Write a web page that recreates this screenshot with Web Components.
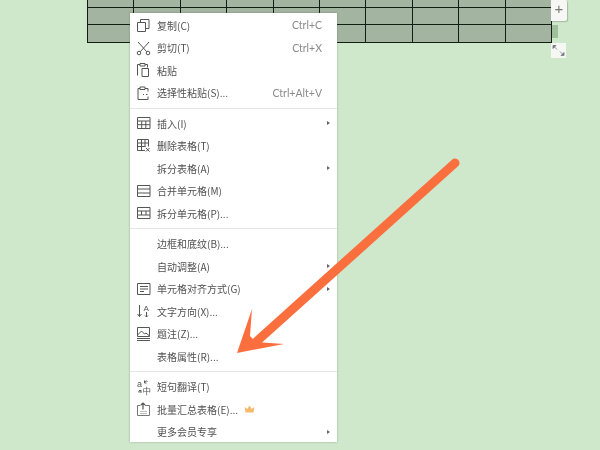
<!DOCTYPE html>
<html>
<head>
<meta charset="utf-8">
<style>
  html, body { margin: 0; padding: 0; height: 100%; overflow: hidden; background: #cfe7cb; }
  body { position: relative; width: 600px; height: 450px; font-family: "Liberation Sans", "Noto Sans CJK SC", sans-serif; }
</style>
</head>
<body>
<doc-table></doc-table>
<context-menu>
  <menu-item label="复制(C)" shortcut="Ctrl+C" icon="copy"></menu-item>
  <menu-item label="剪切(T)" shortcut="Ctrl+X" icon="cut"></menu-item>
  <menu-item label="粘贴" icon="paste"></menu-item>
  <menu-item label="选择性粘贴(S)..." shortcut="Ctrl+Alt+V" icon="pastesp"></menu-item>
  <menu-sep></menu-sep>
  <menu-item label="插入(I)" icon="grid" more></menu-item>
  <menu-item label="删除表格(T)" icon="gridx"></menu-item>
  <menu-item label="拆分表格(A)" more></menu-item>
  <menu-item label="合并单元格(M)" icon="merge"></menu-item>
  <menu-item label="拆分单元格(P)..." icon="split"></menu-item>
  <menu-sep></menu-sep>
  <menu-item label="边框和底纹(B)..."></menu-item>
  <menu-item label="自动调整(A)" more></menu-item>
  <menu-item label="单元格对齐方式(G)" icon="align" more></menu-item>
  <menu-item label="文字方向(X)..." icon="dir"></menu-item>
  <menu-item label="题注(Z)..." icon="caption"></menu-item>
  <menu-item label="表格属性(R)..."></menu-item>
  <menu-sep></menu-sep>
  <menu-item label="短句翻译(T)" icon="translate"></menu-item>
  <menu-item label="批量汇总表格(E)..." icon="batch" crown></menu-item>
  <menu-item label="更多会员专享" more></menu-item>
</context-menu>
<big-arrow></big-arrow>

<script>
class DocTable extends HTMLElement {
    constructor() {
        super();
        this.attachShadow({mode: 'open'});
        let cells = '';
        for (let i = 0; i < 30; i++) cells += '<i></i>';
        this.shadowRoot.innerHTML = `
        <style>
            :host { display: block; margin: -11px 0 0 87px; width: 465px; position: relative; filter: blur(.2px); }
            #grid {
                display: grid;
                grid-template-columns: repeat(10, 1fr);
                grid-auto-rows: 17.5px;
                background: #a3b5a0;
                border-left: 1px solid #0f1f10;
                border-bottom: 1px solid #0f1f10;
            }
            i { border-top: 1px solid #0f1f10; border-right: 1px solid #0f1f10; }
            #plus {
                position: absolute; left: 464px; top: 11px; width: 16px; height: 21px;
                background: #f7f8f6; border-radius: 0 2px 2px 0;
                box-shadow: 1px 1px 1px rgba(90,110,90,.35);
                color: #777; font: 15px/17px "Liberation Sans", sans-serif; text-align: center;
            }
            #tab { position: absolute; left: 465px; top: 36px; width: 6px; height: 13px; background: #9fc09b; }
            #resize {
                position: absolute; left: 464px; top: 54px; width: 15px; height: 15px;
                background: #f5f7f3;
            }
        </style>
        <div id="grid">${cells}</div>
        <div id="plus">+</div>
        <div id="tab"></div>
        <div id="resize">
            <svg width="15" height="15" viewBox="0 0 15 15" fill="#778" stroke="#778" stroke-width=".8">
                <path d="M2 2.500h3l-3 3zM3 3.500l3 3" />
                <path d="M13 12.500h-3l3-3zM12 11.500l-3-3" />
            </svg>
        </div>
        `;
    }
}
customElements.define('doc-table', DocTable);

class ContextMenu extends HTMLElement {
    constructor() {
        super();
        this.attachShadow({mode: 'open'});
        this.shadowRoot.innerHTML = `
        <style>
            :host {
                position: absolute; left: 130px; top: 13px; width: 207px; height: 429px;
                box-sizing: border-box; padding: 1px 0 0;
                background: #fff;
                box-shadow: 0 0 2px rgba(70,90,70,.4);
                display: flex; flex-direction: column;
                font-family: "Noto Sans CJK SC", "Liberation Sans", sans-serif;
            }
        </style>
        <slot></slot>
        `;
    }
}
customElements.define('context-menu', ContextMenu);

const ICONS = {
    copy: '<path d="M3.500 6.500h8v9h-8z"/><path d="M6.500 6.500v-3h8.500v9h-3.500"/>',
    cut: '<circle cx="5" cy="14" r="1.800"/><circle cx="14" cy="14" r="1.800"/><path d="M6.300 12.700L15 3M12.700 12.700L4 3"/>',
    paste: '<path d="M3.500 14.500v-11h2.500M11 3.500h2.500v3"/><path d="M6 2.500h5v2.500h-5z"/><path d="M8 7.500h6.500v8h-6.500z"/>',
    pastesp: '<path d="M6 4.500h-2v11h10v-3M11 4.500h3v3"/><path d="M6 3h5v2.500h-5z"/><path d="M9 10.500h1M12 10.500h1.500" />',
    grid: '<path d="M3.500 3.500h12.500v11h-12.500zM3.500 7h12.500M3.500 10.700h12.500M7.700 7v7.500M11.800 7v7.500"/>',
    gridx: '<path d="M11 13.500h-7.500v-11h11v7M3.500 6h11M3.500 9.500h8M7.500 2.500v11M11 2.500v7"/><path d="M12 11l3.500 3.500M15.500 11l-3.500 3.500" />',
    merge: '<path d="M3.500 3.500h12.500v11h-12.500zM3.500 7h12.500M3.500 11h12.500"/>',
    split: '<path d="M3.500 3.500h12.500v11h-12.500zM3.500 7h12.500M3.500 11h12.500M7.500 7v4M12 7v4"/>',
    align: '<path d="M3.500 3.500h12.500v11h-12.500z"/><path d="M6 6.500h8M6 9h8M6 11.500h4"/>',
    dir: '<path d="M5.500 3v11.500M3.500 12l2 2.500 2-2.500"/><text x="9.500" y="8.500" font-size="8" font-family="Liberation Sans" fill="#555" stroke="none">A</text><path d="M12.500 10v5M11 13.500l1.500 1.500 1.500-1.500"/>',
    caption: '<path d="M3.500 2.500h12v9h-12z"/><path d="M3.500 10l4-4 3 3 1.500-1 3.500 3"/><path d="M3 13.500h13M3 15.500h13"/>',
    translate: '<text x="3" y="8.500" font-size="9" font-family="Liberation Sans" fill="#555" stroke="none">a</text><text x="8.500" y="16" font-size="8.500" fill="#555" stroke="none">中</text><path d="M10.500 5c.5-2 2-2.500 3-1.500M10.500 2.500l0 2.500 2 0"/><path d="M7 12c-.5 2-2 2.500-3 1.500M7 15l0-2.500-2 0" />',
    batch: '<path d="M3.500 5.500h3M11 5.500h4.500v10h-12v-10" stroke="#777"/><path d="M9 9.500v-6.500M7 5l2-2 2 2" stroke-width="1.200"/><path d="M6 11.500h7M6 13.500h7" stroke="#bbb"/>'
};

class MenuItem extends HTMLElement {
    constructor() {
        super();
        this.attachShadow({mode: 'open'});
    }
    connectedCallback() {
        const icon = ICONS[this.getAttribute('icon')] || '';
        const shortcut = this.getAttribute('shortcut') || '';
        this.shadowRoot.innerHTML = `
        <style>
            :host {
                display: flex; align-items: center; flex: none;
                height: 22.500px; padding: 0 6px 0 4px;
                color: #505050; font-size: 10px; filter: blur(.25px);
            }
            svg { width: 18px; height: 18px; flex: none; fill: none; stroke: #555; stroke-width: 1; margin-right: 5px; }
            #label { white-space: pre; }
            #shortcut { margin-left: auto; color: #8a8a8a; font: 10.500px "Lato", "Liberation Sans", sans-serif; padding-right: 9px; }
            #crown { margin-left: 6px; width: 11px; height: 8px; margin-right: 0; stroke: none; fill: #f5b96e; }
            #more {
                margin-left: auto; margin-right: 1px; width: 0; height: 0;
                border-left: 3px solid #666; border-top: 2.500px solid transparent; border-bottom: 2.500px solid transparent;
            }
        </style>
        <svg viewBox="0 0 18 18">${icon}</svg>
        <span id="label">${this.getAttribute('label')}</span>
        ${this.hasAttribute('crown') ? '<svg id="crown" viewBox="0 0 12 10"><path d="M1 9.500L0 2.500l3.200 2.500L6 .5l2.800 4.500L12 2.500 11 9.500z"/></svg>' : ''}
        ${shortcut ? `<span id="shortcut">${shortcut}</span>` : ''}
        ${this.hasAttribute('more') ? '<span id="more"></span>' : ''}
        `;
    }
}
customElements.define('menu-item', MenuItem);

class MenuSep extends HTMLElement {
    constructor() {
        super();
        this.attachShadow({mode: 'open'});
        this.shadowRoot.innerHTML = `
        <style>
            :host { display: block; flex: none; height: 1px; margin: 3.500px 0; background: #e6e6e6; }
        </style>
        `;
    }
}
customElements.define('menu-sep', MenuSep);

class BigArrow extends HTMLElement {
    constructor() {
        super();
        this.attachShadow({mode: 'open'});
        this.shadowRoot.innerHTML = `
        <style>
            :host { position: absolute; left: 0; top: 0; width: 600px; height: 450px; pointer-events: none; }
            svg { display: block; }
        </style>
        <svg width="600" height="450" viewBox="0 0 600 450">
            <path d="M455 163L256 342" stroke="#fb6f3f" stroke-width="9" stroke-linecap="round" fill="none"/>
            <path d="M252 309L237 353 284 344 256 342 250 336z" fill="#fb6f3f"/>
        </svg>
        `;
    }
}
customElements.define('big-arrow', BigArrow);
</script>
</body>
</html>
